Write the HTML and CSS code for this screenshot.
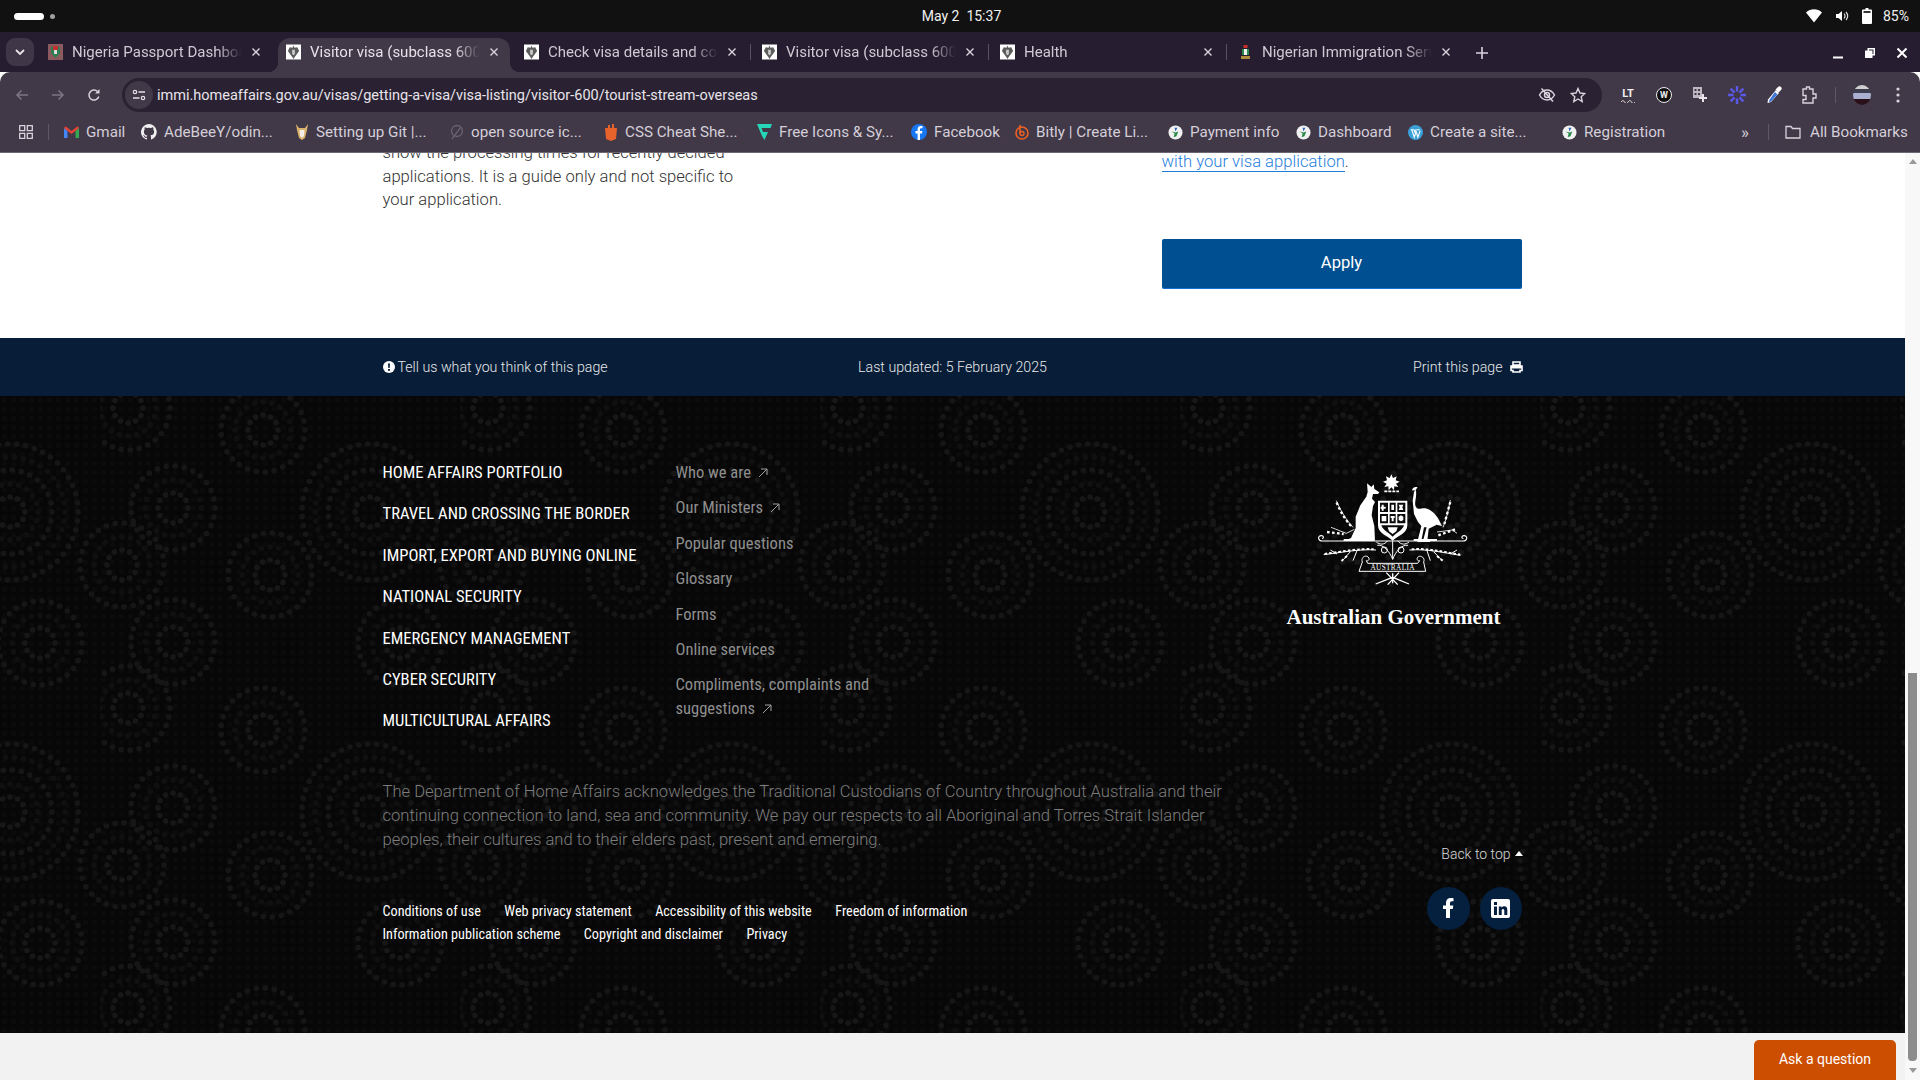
FILE: index.html
```html
<!DOCTYPE html>
<html lang="en">
<head>
    <meta charset="UTF-8">
    <title>Visitor visa (subclass 600)</title>
    <link rel="stylesheet" href="styles.css">
</head>
<body>
<svg class="defs" width="0" height="0">
    <symbol id="crest" viewBox="0 0 16 16">
        <rect width="16" height="16" fill="#fff"/>
        <path d="M8 1 9 3.500 12 3 14 7 11.500 10.500 9.500 13 8 15.500 6.500 13 4.500 10.500 2 7 4 3 7 3.500Z" fill="#5c5c5c"/>
        <path d="M6.500 5.500h3v4.500L8 11.500 6.500 10Z" fill="#c8c8c8"/>
    </symbol>
    <symbol id="globe" viewBox="0 0 16 16">
        <circle cx="8" cy="8" r="7.500" fill="#f1f1f1"/>
        <path d="M4 7 7 9 6 13 9 12 11 7 8 8Z" fill="#2a8a4a"/>
        <path d="M7 3h3L8 7Z" fill="#2a62b8"/>
    </symbol>
    <symbol id="close" viewBox="0 0 10 10">
        <path d="M1.500 1.500 8.500 8.500M8.500 1.500 1.500 8.500" stroke="currentColor" stroke-width="1.400" fill="none"/>
    </symbol>
</svg>

<div class="statusbar">
    <div class="workspaces"><span class="pill"></span><span class="dot"></span></div>
    <div class="clock">May 2&nbsp;&nbsp;15:37</div>
    <div class="tray">
        <svg width="16" height="14" viewBox="0 0 16 14"><path d="M0 3.500C4.500-.8 11.500-.8 16 3.500L8 13.500Z" fill="#fff"/></svg>
        <svg width="14" height="14" viewBox="0 0 14 14"><path d="M1 5h2.500L7 2v10L3.500 9H1Z" fill="#fff"/><path d="M9 4.500c1.200 1.500 1.200 3.500 0 5M11 3c2 2.400 2 5.600 0 8" stroke="#ddd" stroke-width="1.200" fill="none"/></svg>
        <svg width="10" height="16" viewBox="0 0 10 16"><path d="M3.500 0h3v1.500H9a1 1 0 0 1 1 1V15a1 1 0 0 1-1 1H1a1 1 0 0 1-1-1V2.500a1 1 0 0 1 1-1h2.500Z" fill="#fff"/><path d="M1.500 3h7v2h-7Z" fill="#333"/></svg>
        <span class="percent">85%</span>
    </div>
</div>

<div class="tabstrip">
    <div class="tabsearch">
        <svg width="10" height="7" viewBox="0 0 10 7"><path d="M1 1 5 5 9 1" stroke="#e8e4ea" stroke-width="1.800" fill="none"/></svg>
    </div>
    <div class="tab">
        <svg class="favicon" width="15" height="16" viewBox="0 0 15 16"><rect width="15" height="16" fill="#8a5a5f"/><path d="M3 3h9v6l-4.500 5L3 9Z" fill="#2e7d4f"/><path d="M5 2h5v4H5Z" fill="#c13030"/><path d="M6 6h3v4H6Z" fill="#ddd"/></svg>
        <span class="tab-title">Nigeria Passport Dashboard</span>
        <svg class="tab-close" width="10" height="10"><use href="#close"/></svg>
    </div>
    <div class="tab active">
        <svg class="favicon" width="15" height="16"><use href="#crest"/></svg>
        <span class="tab-title">Visitor visa (subclass 600)</span>
        <svg class="tab-close" width="10" height="10"><use href="#close"/></svg>
    </div>
    <div class="tab">
        <svg class="favicon" width="15" height="16"><use href="#crest"/></svg>
        <span class="tab-title">Check visa details and conditions</span>
        <svg class="tab-close" width="10" height="10"><use href="#close"/></svg>
        <i class="tab-sep"></i>
    </div>
    <div class="tab">
        <svg class="favicon" width="15" height="16"><use href="#crest"/></svg>
        <span class="tab-title">Visitor visa (subclass 600)</span>
        <svg class="tab-close" width="10" height="10"><use href="#close"/></svg>
        <i class="tab-sep"></i>
    </div>
    <div class="tab">
        <svg class="favicon" width="15" height="16"><use href="#crest"/></svg>
        <span class="tab-title">Health</span>
        <svg class="tab-close" width="10" height="10"><use href="#close"/></svg>
        <i class="tab-sep"></i>
    </div>
    <div class="tab">
        <svg class="favicon" width="15" height="16" viewBox="0 0 15 16"><path d="M5.500 1h4v3h-4Z" fill="#c9302c"/><path d="M4 5h7v6H4Z" fill="#2d8a4e"/><path d="M6 5h3v6H6Z" fill="#eee"/><path d="M3 12h9v3H3Z" fill="#b08a3a"/></svg>
        <span class="tab-title">Nigerian Immigration Service</span>
        <svg class="tab-close" width="10" height="10"><use href="#close"/></svg>
        <i class="tab-sep"></i>
    </div>
    <svg class="newtab" width="12" height="12" viewBox="0 0 12 12"><path d="M6 0v12M0 6h12" stroke="#d8d3dc" stroke-width="1.600"/></svg>
    <div class="winctl">
        <svg width="12" height="12" viewBox="0 0 12 12"><path d="M1 10.500h10" stroke="#fff" stroke-width="2"/></svg>
        <svg width="12" height="12" viewBox="0 0 12 12"><path d="M3.500 1h7.500v7.500h-2.500V11H1V3.500h2.500Z M5 2.500v1h3.500v3.500h1V2.500Z" fill="#fff" fill-rule="evenodd"/></svg>
        <svg width="12" height="12" viewBox="0 0 12 12"><path d="M1.500 1.500 10.500 10.500M10.500 1.500 1.500 10.500" stroke="#fff" stroke-width="2"/></svg>
    </div>
</div>

<div class="toolbar">
    <div class="navbtns">
        <svg width="14" height="12" viewBox="0 0 14 12"><path d="M13 6H2M6.500 1.500 2 6l4.500 4.500" stroke="#7d7585" stroke-width="1.500" fill="none"/></svg>
        <svg width="14" height="12" viewBox="0 0 14 12"><path d="M1 6h11M7.500 1.500 12 6l-4.500 4.500" stroke="#7d7585" stroke-width="1.500" fill="none"/></svg>
        <svg width="14" height="14" viewBox="0 0 14 14"><path d="M11.800 8.500A5 5 0 1 1 10.500 3.500" stroke="#d8d3dc" stroke-width="1.500" fill="none"/><path d="M12.500 1v4.500H8Z" fill="#d8d3dc"/></svg>
    </div>
    <div class="omnibox">
        <span class="site-info">
            <svg width="14" height="12" viewBox="0 0 14 12"><circle cx="3" cy="3" r="1.700" stroke="#e4e0e7" stroke-width="1.200" fill="none"/><path d="M6.500 3H13M1 9h6.500" stroke="#e4e0e7" stroke-width="1.300"/><circle cx="11" cy="9" r="1.700" stroke="#e4e0e7" stroke-width="1.200" fill="none"/></svg>
        </span>
        <span class="url">immi.homeaffairs.gov.au/visas/getting-a-visa/visa-listing/visitor-600/tourist-stream-overseas</span>
        <svg class="omni-icon" width="18" height="16" viewBox="0 0 18 16"><path d="M1.500 8C3.500 4.500 6 3 9 3s5.500 1.500 7.500 5c-2 3.500-4.500 5-7.500 5S3.500 11.500 1.500 8Z" stroke="#d8d3dc" stroke-width="1.500" fill="none"/><circle cx="9" cy="8" r="2.500" stroke="#d8d3dc" stroke-width="1.500" fill="none"/><path d="M3.500 1.500 15 14.500" stroke="#d8d3dc" stroke-width="1.600"/></svg>
        <svg class="omni-icon" width="16" height="16" viewBox="0 0 16 16"><path d="M8 1.500 10 6l4.800.5-3.600 3.200 1 4.800L8 12l-4.200 2.500 1-4.800L1.200 6.500 6 6Z" stroke="#d8d3dc" stroke-width="1.400" fill="none"/></svg>
    </div>
    <div class="extensions">
        <span class="ext ext-lt">LT<svg width="14" height="3" viewBox="0 0 14 3"><path d="M0 2c2-2 2-2 3.500 0s2 2 3.500 0 2-2 3.500 0 2 2 3.500 0" stroke="#eee" fill="none"/></svg></span>
        <span class="ext ext-w">W</span>
        <svg class="ext" width="16" height="18" viewBox="0 0 16 18"><path d="M1 1h9v11H1Z" fill="#bdb8c2"/><path d="M2.500 3h2v2h-2ZM6 3h2v2H6ZM2.500 7h2v2h-2ZM6 7h2v2H6Z" fill="#403748"/><path d="M11 8v8M7 12h8" stroke="#e8e4ea" stroke-width="2"/></svg>
        <svg class="ext" width="18" height="18" viewBox="0 0 18 18"><g stroke="#5b58e8" stroke-width="2.400"><path d="M9 0v18M0 9h18M2.600 2.600l12.800 12.800M15.400 2.600 2.600 15.400"/></g><circle cx="9" cy="9" r="3.500" fill="#403748"/></svg>
        <svg class="ext" width="16" height="18" viewBox="0 0 16 18"><path d="M10 4 13 7 5 16 1.500 17 2 13.500Z" fill="#fff"/><path d="M9 6 11.500 8.500 5 15.500 3 16 3.300 14Z" fill="#3d74d8"/><path d="M9.500 3.500 12 1a2 2 0 0 1 3 3l-2.500 2.500Z" fill="#fff"/></svg>
        <svg class="ext" width="16" height="18" viewBox="0 0 16 18"><path d="M1 3h3.500V1h3v2H11v5h3v4h-3v5H1v-3.500h3V9.500H1Z" stroke="#d8d3dc" stroke-width="1.400" fill="none"/></svg>
        <i class="vsep"></i>
        <span class="avatar"></span>
        <svg class="ext-menu" width="4" height="16" viewBox="0 0 4 16"><circle cx="2" cy="2" r="1.600" fill="#d8d3dc"/><circle cx="2" cy="8" r="1.600" fill="#d8d3dc"/><circle cx="2" cy="14" r="1.600" fill="#d8d3dc"/></svg>
    </div>
</div>

<div class="bookmarks">
    <div class="bm-apps">
        <svg width="14" height="14" viewBox="0 0 14 14"><path d="M.7.700h5v5h-5ZM8.300.700h5v5h-5ZM.7 8.300h5v5h-5ZM8.300 8.300h5v5h-5Z" stroke="#d8d3dc" stroke-width="1.300" fill="none"/></svg>
        <i class="vsep"></i>
    </div>
    <div class="bm"><svg width="15" height="12" viewBox="0 0 15 12"><path d="M0 2v10h3.500V5Z" fill="#4285f4"/><path d="M15 2v10h-3.500V5Z" fill="#34a853"/><path d="M0 2 1.500.3 7.500 5 13.500.3 15 2 7.500 8Z" fill="#ea4335"/></svg><span>Gmail</span></div>
    <div class="bm"><svg width="16" height="16" viewBox="0 0 16 16"><path d="M8 0a8 8 0 0 0-2.500 15.600c.4.100.5-.2.500-.4v-1.400c-2.200.5-2.700-1-2.700-1-.4-.9-.9-1.200-.9-1.200-.7-.5.100-.5.100-.5.800.1 1.200.8 1.200.8.700 1.200 1.900.9 2.300.7.100-.5.300-.9.500-1.100-1.800-.2-3.600-.9-3.600-4 0-.9.300-1.600.8-2.100-.1-.2-.4-1 .1-2.100 0 0 .7-.2 2.200.8a7.600 7.600 0 0 1 4 0c1.500-1 2.200-.8 2.200-.8.400 1.100.2 1.900.1 2.100.5.600.8 1.300.8 2.100 0 3.100-1.900 3.700-3.700 3.900.3.300.6.800.6 1.500v2.200c0 .2.100.5.500.4A8 8 0 0 0 8 0Z" fill="#f0f0f0"/></svg><span>AdeBeeY/odin...</span></div>
    <div class="bm"><svg width="14" height="16" viewBox="0 0 14 16"><path d="M1 0 4 4h6l3-4-1 6-2 8-3 2-3-2-2-8Z" fill="#d9b26a"/><path d="M4.500 6h5l-.5 6-2 2-2-2Z" fill="#f3efe6"/></svg><span>Setting up Git |...</span></div>
    <div class="bm"><svg width="14" height="16" viewBox="0 0 14 16"><circle cx="7" cy="7" r="5.500" stroke="#6a6272" stroke-width="1.300" fill="none"/><path d="M2 15 11 3" stroke="#6a6272" stroke-width="1.300"/></svg><span>open source ic...</span></div>
    <div class="bm"><svg width="14" height="17" viewBox="0 0 14 17"><path d="M1 4h12l-1 11-5 2-5-2Z" fill="#e8622c"/><path d="M4 4V1h2v3ZM8 4V0h2v4Z" fill="#e8622c"/></svg><span>CSS Cheat She...</span></div>
    <div class="bm"><svg width="15" height="16" viewBox="0 0 15 16"><path d="M0 0h15l-1.500 4H4.500L6 8h5L9 12.500 7.500 16 5 12Z" fill="#26d6b8"/></svg><span>Free Icons &amp; Sy...</span></div>
    <div class="bm"><svg width="16" height="16" viewBox="0 0 16 16"><circle cx="8" cy="8" r="8" fill="#1877f2"/><path d="M9 16V9.500h2l.4-2.500H9V5.500c0-.7.300-1.200 1.300-1.200h1.200V2.100C11.200 2 10.500 2 9.800 2 8 2 6.600 3.100 6.600 5.200V7H4.500v2.500h2.100V16Z" fill="#fff"/></svg><span>Facebook</span></div>
    <div class="bm"><svg width="14" height="16" viewBox="0 0 14 16"><circle cx="7" cy="9" r="6" stroke="#ee6123" stroke-width="1.600" fill="none"/><path d="M5 1v8.500" stroke="#ee6123" stroke-width="1.600"/><circle cx="7" cy="9.500" r="2" stroke="#ee6123" stroke-width="1.300" fill="none"/></svg><span>Bitly | Create Li...</span></div>
    <div class="bm"><svg width="15" height="15"><use href="#globe"/></svg><span>Payment info</span></div>
    <div class="bm"><svg width="15" height="15"><use href="#globe"/></svg><span>Dashboard</span></div>
    <div class="bm"><svg width="15" height="15" viewBox="0 0 16 16"><circle cx="8" cy="8" r="8" fill="#3aa0d8"/><path d="M3 5h3.500M9 5h3.500M4 5l2.700 8L8 9 6.500 5M8 5l2.500 8L13 6" stroke="#fff" stroke-width="1.200" fill="none"/></svg><span>Create a site...</span></div>
    <div class="bm"><svg width="15" height="15"><use href="#globe"/></svg><span>Registration</span></div>
    <div class="bm-more">&raquo;</div>
    <i class="vsep"></i>
    <div class="bm bm-all"><svg width="16" height="14" viewBox="0 0 16 14"><path d="M1 1.500h5l1.500 2H15v9.500H1Z" stroke="#d8d3dc" stroke-width="1.300" fill="none"/></svg><span>All Bookmarks</span></div>
</div>

<div class="viewport">
    <div class="page">
        <section class="content">
            <div class="wrap content-grid">
                <p class="intro">show the processing times for recently decided applications. It is a guide only and not specific to your application.</p>
                <div>
                    <p class="intro-link"><a href="#">with your visa application</a>.</p>
                    <a class="apply" href="#">Apply</a>
                </div>
            </div>
        </section>

        <section class="feedback">
            <div class="wrap feedback-row">
                <span class="feedback-item">
                    <svg width="12" height="12" viewBox="0 0 12 12"><circle cx="6" cy="6" r="6" fill="#fff"/><path d="M5 2.500h2L6.700 7H5.300ZM5 8h2v1.700H5Z" fill="#071d38"/></svg>
                    Tell us what you think of this page
                </span>
                <span>Last updated: 5 February 2025</span>
                <span class="feedback-item print">
                    Print this page
                    <svg width="13" height="12" viewBox="0 0 13 12"><path d="M3 1h7v3H3ZM1 5h11v4.500h-2V11H3V9.500H1Z" stroke="#fff" stroke-width="1.600" fill="none"/><path d="M1 5h11v2.500H1Z" fill="#fff"/></svg>
                </span>
            </div>
        </section>

        <footer class="footer">
            <div class="wrap">
                <div class="foot-top">
                    <ul class="foot-main">
                        <li>HOME AFFAIRS PORTFOLIO</li>
                        <li>TRAVEL AND CROSSING THE BORDER</li>
                        <li>IMPORT, EXPORT AND BUYING ONLINE</li>
                        <li>NATIONAL SECURITY</li>
                        <li>EMERGENCY MANAGEMENT</li>
                        <li>CYBER SECURITY</li>
                        <li>MULTICULTURAL AFFAIRS</li>
                    </ul>
                    <ul class="foot-sub">
                        <li>Who we are <svg class="ext-arrow" width="10" height="10" viewBox="0 0 10 10"><path d="M1 9 9 1M3 1h6v6" stroke="#a0a0a0" fill="none"/></svg></li>
                        <li>Our Ministers <svg class="ext-arrow" width="10" height="10" viewBox="0 0 10 10"><path d="M1 9 9 1M3 1h6v6" stroke="#a0a0a0" fill="none"/></svg></li>
                        <li>Popular questions</li>
                        <li>Glossary</li>
                        <li>Forms</li>
                        <li>Online services</li>
                        <li>Compliments, complaints and suggestions <svg class="ext-arrow" width="10" height="10" viewBox="0 0 10 10"><path d="M1 9 9 1M3 1h6v6" stroke="#a0a0a0" fill="none"/></svg></li>
                    </ul>
                    <div class="gov-logo">
                        <svg class="crest" width="170" height="120" viewBox="-4 0 510 360">
                            <!-- star and wreath -->
                            <path fill="#fff" d="M243 13l5 11 11-5-3 12 12 4-11 6 7 10-12-2-1 12-8-9-8 9-1-12-12 2 7-10-11-6 12-4-3-12 11 5Z"/>
                            <path d="M222 64h44" stroke="#fff" stroke-width="5" stroke-dasharray="9 3"/>
                            <!-- kangaroo -->
                            <path fill="#fff" d="M170 40l13 11 7-8 2 14 15 10-4 5-15 0-3 14 9 10-6 12-4 28 8 32 2 44h-92l20-8 14-30 0-34 14-34 18-26 4-14Z"/>
                            <!-- emu -->
                            <path fill="#fff" d="M322 52c-9-4-16 2-17 9l11-1c3 6 1 22-1 34-2 14 2 24 16 22 20-6 38 8 50 26 6 10 12 22 14 26l-16-4-12 6-12 6-4 36 8 0 0 4h-22l12-44-8 0-8 40 8 0 0 4h-20l12-48-10-12-12-24-4-40 4-26Z"/>
                            <!-- shield -->
                            <path fill="#fff" d="M203 92h88v74c0 24-26 30-44 46-18-16-44-22-44-46Z"/>
                            <path fill="#0a0a0a" d="M209 98h24v28h-24ZM238 98h18v28h-18ZM261 98h24v28h-24ZM209 132h24v28h-24ZM238 132h18v28h-18ZM261 132h24v28h-24ZM213 166h68c-4 14-20 20-34 34-14-14-30-20-34-34Z"/>
                            <path fill="#fff" d="M214 104h6v6h6v6h-6v6h-6v-6h-3v-6h3ZM243 104h8v16h-8ZM265 104h14l-3 8 3 8h-14l3-8ZM214 138h14v16h-14ZM241 138h12v6h-3v10h-6v-10h-3ZM265 140l7-4 7 4v10l-7 4-7-4ZM232 172h30l-4 12-11 8-11-8Z"/>
                            <!-- base bar with curled ends -->
                            <path d="M36 213H458M36 213c-12 0-16-14-4-16 8-1 10 8 3 9M458 213c12 0 16-14 4-16-8-1-10 8-3 9" stroke="#fff" stroke-width="3.500" fill="none"/>
                            <path d="M100 210h90M310 210h70" stroke="#fff" stroke-width="6"/>
                            <!-- upper wattle sprays -->
                            <g fill="none" stroke="#fff" stroke-width="2.500">
                                <path d="M128 172C108 150 92 125 78 92M62 172 108 190 132 178M398 172C408 150 414 120 420 90M380 186 426 180 440 190"/>
                            </g>
                            <g fill="none" stroke="#fff" stroke-width="7" stroke-dasharray="8 7">
                                <path d="M122 168C104 148 90 124 78 96M50 186 100 192M402 162C408 142 414 116 420 96M384 196 440 176"/>
                            </g>
                            <!-- stem and lower sprays -->
                            <g fill="none" stroke="#fff" stroke-width="3">
                                <path d="M247 268V212M247 268c-8-22-28-46-46-42M247 268c8-22 28-46 46-42M232 212c-10 14-24 12-34 4M262 212c10 14 24 12 34 4"/>
                                <path d="M197 240C150 236 90 248 40 254M297 240C350 236 400 248 450 256M120 245 100 268M140 242 128 272M370 245 392 268M350 242 360 272M80 252 60 240M420 252 440 240"/>
                                <circle cx="222" cy="240" r="9"/>
                                <circle cx="272" cy="240" r="9"/>
                            </g>
                            <g fill="none" stroke="#fff" stroke-width="6" stroke-dasharray="8 6">
                                <path d="M190 238C150 234 90 246 40 252M304 238C350 234 400 246 450 254M110 258 90 276M380 258 402 276"/>
                            </g>
                            <!-- scroll -->
                            <path d="M156 276c-6-16 14-24 20-12 2 6-4 10-8 8l4 8h150l6-8c-6 2-10-4-6-10 6-8 24 0 18 14l6 28H146Z" fill="#0a0a0a" stroke="#fff" stroke-width="3"/>
                            <text class="crest-scroll" x="247" y="301" text-anchor="middle">AUSTRALIA</text>
                            <!-- knot at the foot -->
                            <g fill="none" stroke="#fff" stroke-width="4">
                                <path d="M196 342 247 322 296 342M228 308 262 344M266 308 232 344M247 310V340"/>
                            </g>
                        </svg>
                        <div class="gov-name">Australian Government</div>
                    </div>
                </div>
                <div class="foot-bottom">
                    <div class="foot-text">
                        <p class="ack">The Department of Home Affairs acknowledges the Traditional Custodians of Country throughout Australia and their continuing connection to land, sea and community. We pay our respects to all Aboriginal and Torres Strait Islander peoples, their cultures and to their elders past, present and emerging.</p>
                        <ul class="legal">
                            <li>Conditions of use</li>
                            <li>Web privacy statement</li>
                            <li>Accessibility of this website</li>
                            <li>Freedom of information</li>
                            <li>Information publication scheme</li>
                            <li>Copyright and disclaimer</li>
                            <li>Privacy</li>
                        </ul>
                    </div>
                    <div class="foot-side">
                        <div class="backtop">Back to top <svg width="8" height="5" viewBox="0 0 8 5"><path d="M4 0 8 5H0Z" fill="#fff"/></svg></div>
                        <div class="social">
                            <span class="social-fb"><svg width="11" height="20" viewBox="0 0 11 20"><path d="M3 20v-9H0V7.500h3V5c0-3.200 1.900-5 4.800-5 1.300 0 2.700.2 2.700.2v3H9c-1.500 0-2 .9-2 1.900v2.400h3.300L9.800 11H7v9Z" fill="#fff"/></svg></span>
                            <span class="social-in"><svg width="19" height="19" viewBox="0 0 19 19"><rect width="19" height="19" rx="2" fill="#fff"/><path d="M3 7.500h3V16H3ZM3 3h3v3H3ZM7.800 7.500h2.800v1.200c.5-.8 1.400-1.400 2.700-1.400 2.300 0 3 1.500 3 3.800V16h-3v-4.200c0-1.100-.3-1.900-1.300-1.900s-1.300.8-1.300 1.900V16h-2.900Z" fill="#05203f"/></svg></span>
                        </div>
                    </div>
                </div>
            </div>
        </footer>

        <div class="page-end"></div>
    </div>
    <div class="scrollbar">
        <i class="arrow-up"></i>
        <div class="thumb-track"><div class="thumb"></div></div>
        <i class="arrow-down"></i>
    </div>
    <a class="ask" href="#">Ask a question</a>
</div>
</body>
</html>
```
FILE: styles.css
```css
*{
    padding: 0;
    margin: 0;
    box-sizing: border-box;
}
ul{
    list-style-type: none;
}
a{
    text-decoration: none;
}
i{
    display: block;
}
svg{
    flex: none;
}
html, body{
    height: 100%;
    overflow: hidden;
}
body{
    display: flex;
    flex-direction: column;
    font-family: Roboto, "Liberation Sans", sans-serif;
    background-color: #ffffff;
}
.defs{
    display: block;
    height: 0;
}

/* top system bar */
.statusbar{
    height: 32px;
    flex: none;
    background-color: #111111;
    color: #f0f0f0;
    display: grid;
    grid-template-columns: 1fr auto 1fr;
    align-items: center;
    padding: 0 11px 0 14px;
    font-size: 14px;
}
.workspaces{
    display: flex;
    align-items: center;
    gap: 6px;
}
.pill{
    width: 30px;
    height: 7px;
    border-radius: 4px;
    background-color: #ffffff;
}
.dot{
    width: 5px;
    height: 5px;
    border-radius: 50%;
    background-color: #a0a0a0;
}
.tray{
    display: flex;
    justify-content: flex-end;
    align-items: center;
    gap: 13px;
}
.percent{
    margin-left: -2px;
    font-stretch: 90%;
}

/* tabs */
.tabstrip{
    height: 40px;
    flex: none;
    background-color: #261e30;
    display: flex;
    align-items: flex-end;
    color: #cfc9d3;
    font-size: 15px;
    position: relative;
}
.tabsearch{
    width: 28px;
    height: 28px;
    margin: 0 6px 6px 6px;
    border-radius: 9px;
    background-color: #3f3648;
    display: flex;
    align-items: center;
    justify-content: center;
}
.tab{
    width: 232px;
    height: 34px;
    margin-right: 6px;
    padding: 0 11px 6px 8px;
    display: flex;
    align-items: center;
    gap: 9px;
    position: relative;
    border-radius: 12px 12px 0 0;
}
.tab.active{
    background-color: #413848;
    color: #e6e2e9;
}
.tab.active::before,
.tab.active::after{
    content: "";
    position: absolute;
    bottom: 0;
    width: 10px;
    height: 10px;
}
.tab.active::before{
    left: -10px;
    background: radial-gradient(circle at 0 0, transparent 10px, #413848 10.5px);
}
.tab.active::after{
    right: -10px;
    background: radial-gradient(circle at 100% 0, transparent 10px, #413848 10.5px);
}
.tab-title{
    flex: 1;
    white-space: nowrap;
    overflow: hidden;
    -webkit-mask-image: linear-gradient(to right, #000 85%, transparent);
    mask-image: linear-gradient(to right, #000 85%, transparent);
}
.tab-close{
    color: #d8d3dc;
}
.tab-sep{
    position: absolute;
    left: -4px;
    top: 6px;
    width: 1px;
    height: 16px;
    background-color: #5a5162;
}
.tab.active + .tab .tab-sep{
    display: none;
}
.newtab{
    margin: 0 0 13px 8px;
}
.winctl{
    margin-left: auto;
    padding: 0 12px 13px 0;
    display: flex;
    gap: 20px;
}

/* url row */
.toolbar{
    height: 40px;
    flex: none;
    background-color: #413848;
    border-radius: 10px 10px 0 0;
    display: flex;
    align-items: flex-end;
}
.navbtns{
    width: 122px;
    height: 34px;
    display: flex;
    align-items: center;
    justify-content: space-between;
    padding: 0 21px 0 15px;
}
.omnibox{
    width: 1480px;
    height: 34px;
    border-radius: 17px;
    background-color: #2a2233;
    display: flex;
    align-items: center;
    padding: 0 16px 0 3px;
    color: #e8e4ea;
}
.site-info{
    width: 28px;
    height: 28px;
    border-radius: 50%;
    background-color: #413848;
    display: flex;
    align-items: center;
    justify-content: center;
    margin-right: 4px;
}
.url{
    flex: 1;
    font-size: 14.500px;
    font-stretch: 90%;
}
.omni-icon{
    margin-left: 14px;
}
.extensions{
    flex: 1;
    height: 34px;
    display: flex;
    align-items: center;
    padding-left: 18px;
    gap: 20px;
}
.ext-lt{
    font-size: 11px;
    font-weight: 700;
    color: #eeeeee;
    width: 16px;
    display: flex;
    flex-direction: column;
    align-items: center;
    line-height: 12px;
}
.ext-w{
    width: 16px;
    height: 16px;
    border-radius: 50%;
    background-color: #111111;
    border: 1px solid #eeeeee;
    color: #eeeeee;
    font-size: 9px;
    font-weight: 700;
    line-height: 14px;
    text-align: center;
}
.vsep{
    width: 1px;
    height: 16px;
    background-color: #5f5667;
}
.extensions .vsep{
    margin: 0 -3px;
}
.avatar{
    width: 18px;
    height: 20px;
    border-radius: 50%;
    background: linear-gradient(#cfcfcf 0 22%, #3d3d4d 22% 40%, #a9b0d0 40% 68%, #2a1018 68%);
    display: block;
}
.ext-menu{
    margin-left: 5px;
}

/* bookmarks */
.bookmarks{
    height: 41px;
    flex: none;
    background-color: #413848;
    border-bottom: 1px solid #6d6673;
    color: #d4cfd8;
    font-size: 15.200px;
    font-stretch: 90%;
    display: grid;
    grid-template-columns: 48px 77px 154px 155px 154px 153px 154px 104px 153px 128px 112px 154px 176px 30px 17px auto;
    align-items: center;
    padding-left: 16px;
}
.bm-apps{
    display: flex;
    align-items: center;
    gap: 15px;
    padding-left: 3px;
}
.bm{
    display: flex;
    align-items: center;
    gap: 7px;
    white-space: nowrap;
}
.bm-more{
    font-size: 17px;
    padding-left: 3px;
}
.bm-all{
    gap: 9px;
}

/* page area */
.viewport{
    flex: 1;
    display: flex;
    min-height: 0;
    position: relative;
}
.page{
    flex: 1;
    min-width: 0;
    display: flex;
    flex-direction: column;
}
.wrap{
    width: 1140px;
    margin: 0 auto;
}
.content{
    height: 185px;
    flex: none;
    overflow: hidden;
}
.content-grid{
    display: grid;
    grid-template-columns: 779px 360px;
}
.intro{
    width: 360px;
    margin-top: -12px;
    font-size: 16.600px;
    font-weight: 300;
    line-height: 23.500px;
    color: #333333;
}
.intro-link{
    margin-top: -3px;
    font-size: 16.600px;
    font-weight: 300;
    line-height: 23.500px;
    color: #333333;
}
.intro-link a{
    color: #1f7fdc;
    border-bottom: 1px solid #1f7fdc;
}
.apply{
    display: block;
    margin-top: 65px;
    height: 50px;
    background-color: #005091;
    border-bottom: 1px solid #1170d0;
    border-radius: 2px;
    color: #ffffff;
    text-align: center;
    font-size: 16.600px;
    line-height: 48px;
}

.feedback{
    height: 58px;
    flex: none;
    background-color: #071d38;
    color: #e8e8e8;
    font-size: 14.200px;
    font-weight: 300;
}
.feedback-row{
    height: 100%;
    display: grid;
    grid-template-columns: 1fr auto 1fr;
    align-items: center;
}
.feedback-item{
    display: flex;
    align-items: center;
    gap: 3px;
}
.print{
    justify-content: flex-end;
    gap: 7px;
}

/* footer with the dotted ring background */
.footer{
    height: 637px;
    flex: none;
    background-color: #070707;
    background-position: 100px 4px, 0 0;
    background-size: 360px 300px, 9px 9px;
    background-image: url("data:image/svg+xml,%3Csvg xmlns='http://www.w3.org/2000/svg' xmlns:xlink='http://www.w3.org/1999/xlink' width='360' height='300'%3E%3Cdefs%3E%3Cg id='s' fill='none' stroke-width='5.500' stroke-linecap='round' stroke-dasharray='0 1'%3E%3Ccircle r='15' pathLength='12' stroke='%23171717'/%3E%3Ccircle r='28' pathLength='20' stroke='%23101010'/%3E%3Ccircle r='42' pathLength='29' stroke='%23161616'/%3E%3C/g%3E%3Cg id='l' fill='none' stroke-width='5.500' stroke-linecap='round' stroke-dasharray='0 1'%3E%3Ccircle r='55' pathLength='38' stroke='%23101010'/%3E%3Ccircle r='68' pathLength='47' stroke='%23161616'/%3E%3C/g%3E%3C/defs%3E%3Cuse xlink:href='%23s' x='73' y='108'/%3E%3Cuse xlink:href='%23s' x='270' y='112'/%3E%3Cuse xlink:href='%23l' x='270' y='112'/%3E%3Cuse xlink:href='%23s' x='163' y='30'/%3E%3Cuse xlink:href='%23s' x='163' y='330'/%3E%3Cuse xlink:href='%23s' x='170' y='175'/%3E%3Cuse xlink:href='%23s' x='73' y='242'/%3E%3Cuse xlink:href='%23s' x='300' y='243'/%3E%3Cuse xlink:href='%23s' x='22' y='165'/%3E%3Cuse xlink:href='%23s' x='382' y='165'/%3E%3Cuse xlink:href='%23s' x='28' y='8'/%3E%3Cuse xlink:href='%23s' x='28' y='308'/%3E%3C/svg%3E"), radial-gradient(circle, #0b0b0b 2.600px, transparent 3px);
    color: #ffffff;
}
.foot-top{
    display: grid;
    grid-template-columns: 293px 1fr 214px;
    padding: 64px 22px 0 0;
}
.foot-main{
    padding-top: 3px;
    font-size: 16.600px;
    font-stretch: 75%;
    line-height: 20px;
}
.foot-main li{
    margin-bottom: 21.400px;
}
.foot-main li:last-child{
    margin-bottom: 0;
}
.foot-sub{
    width: 210px;
    padding-top: 1px;
    font-size: 16.500px;
    font-stretch: 75%;
    line-height: 24px;
    color: #8f8f8f;
}
.foot-sub li{
    margin-bottom: 11.400px;
}
.ext-arrow{
    margin-left: 3px;
}
.gov-logo{
    display: flex;
    flex-direction: column;
    align-items: center;
}
.crest{
    margin-top: 10px;
}
.crest-scroll{
    font-family: "Liberation Serif", serif;
    font-size: 22px;
    letter-spacing: 1px;
    fill: #ffffff;
}
.gov-name{
    margin-top: 15px;
    font-family: "Liberation Serif", serif;
    font-weight: 700;
    font-size: 21px;
    line-height: 24px;
    white-space: nowrap;
}
.foot-bottom{
    display: grid;
    grid-template-columns: 1fr 130px;
    margin-top: 47px;
}
.foot-text{
    width: 860px;
}
.ack{
    font-size: 16.600px;
    font-weight: 300;
    line-height: 24px;
    color: #7d7d7d;
}
.legal{
    margin-top: 48px;
    display: flex;
    flex-wrap: wrap;
    gap: 0 23.500px;
    width: 640px;
    font-size: 14.200px;
    font-stretch: 75%;
    line-height: 23px;
}
.foot-side{
    display: flex;
    flex-direction: column;
    align-items: flex-end;
    padding-top: 64px;
}
.backtop{
    font-size: 14px;
    font-weight: 300;
    line-height: 20px;
    color: #d8d8d8;
    display: flex;
    align-items: center;
    gap: 4px;
}
.social{
    margin-top: 23px;
    display: flex;
    gap: 10px;
    padding-right: 1px;
}
.social span{
    width: 43px;
    height: 43px;
    border-radius: 50%;
    background-color: #05203f;
    display: flex;
    align-items: center;
    justify-content: center;
}
.social .social-in{
    width: 42px;
}
.page-end{
    flex: 1;
    background-color: #f2f2f2;
}

/* fake scrollbar */
.scrollbar{
    width: 15px;
    flex: none;
    background-color: #f8f8f8;
    display: flex;
    flex-direction: column;
    align-items: center;
    padding: 6px 0 7px;
}
.arrow-up, .arrow-down{
    width: 0;
    height: 0;
    border-left: 4.500px solid transparent;
    border-right: 4.500px solid transparent;
}
.arrow-up{
    border-bottom: 5px solid #9a9a9a;
}
.arrow-down{
    border-top: 5px solid #9a9a9a;
}
.thumb-track{
    flex: 1;
    width: 100%;
    padding-left: 3px;
    padding-top: 509px;
    padding-bottom: 7px;
}
.thumb{
    height: 100%;
    width: 9px;
    border-radius: 0 0 4px 4px;
    background-color: #8c8c8c;
}

.ask{
    position: absolute;
    right: 24px;
    bottom: -8px;
    width: 142px;
    height: 48px;
    border-radius: 5px 5px 0 0;
    background-color: #cc4e00;
    color: #ffffff;
    font-size: 14px;
    text-align: center;
    line-height: 38px;
}
```
